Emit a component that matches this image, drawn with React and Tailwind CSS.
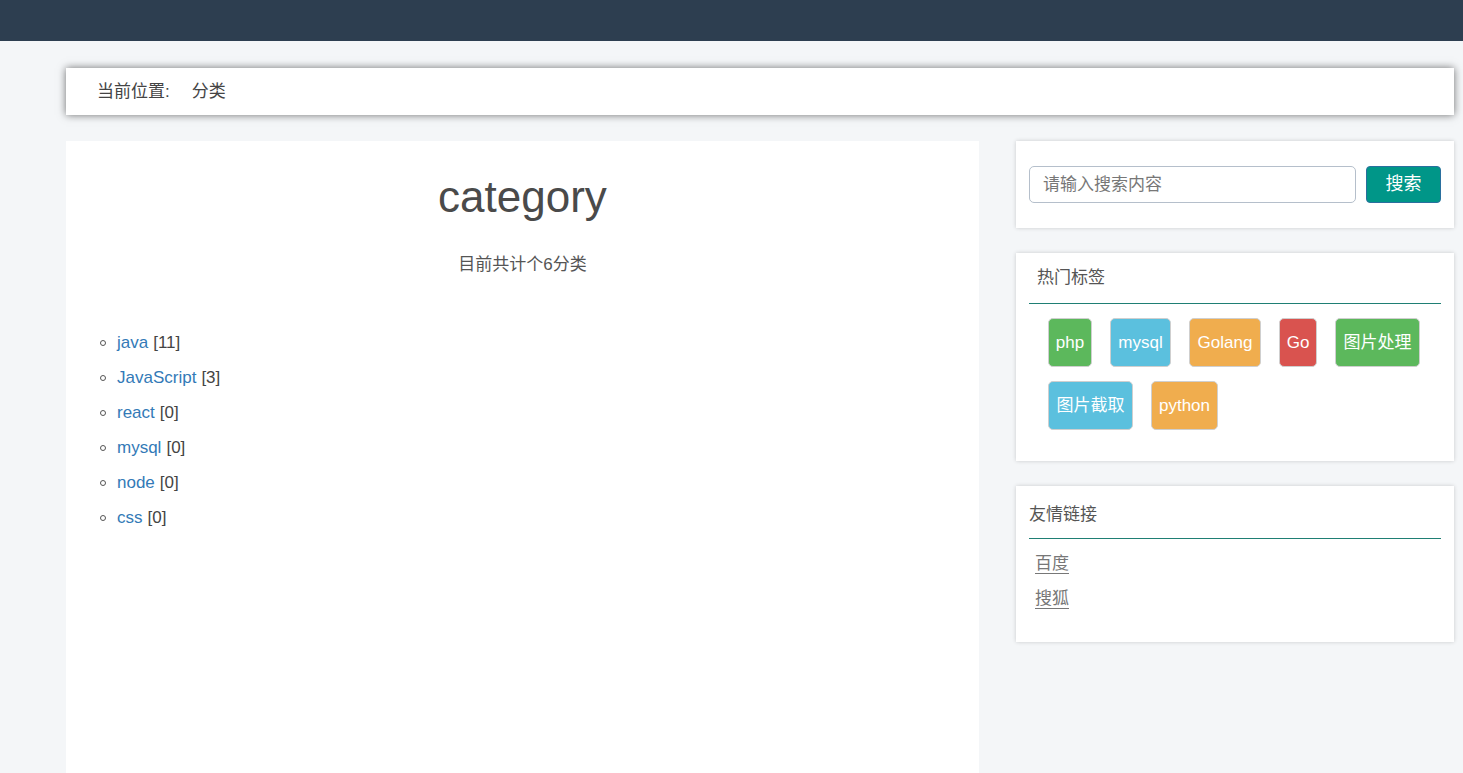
export default function App() {
  const font = { fontFamily: '"Liberation Sans", "Noto Sans CJK SC", sans-serif' };
  const cats = [
    ["java", 11],
    ["JavaScript", 3],
    ["react", 0],
    ["mysql", 0],
    ["node", 0],
    ["css", 0],
  ];
  const tags = [
    ["php", "bg-[#5cb85c]", "w-[44px]"],
    ["mysql", "bg-[#5bc0de]", "w-[61px]"],
    ["Golang", "bg-[#f0ad4e]", "w-[72px]"],
    ["Go", "bg-[#d9534f]", "w-[38px]"],
    ["图片处理", "bg-[#5cb85c]", "w-[85px]"],
    ["图片截取", "bg-[#5bc0de]", "w-[85px]"],
    ["python", "bg-[#f0ad4e]", "w-[67px]"],
  ];
  return (
    <div className="min-h-[773px] bg-[#f4f6f8] text-[#333]" style={font}>
      <div className="h-[41px] bg-[#2d3e50]" />
      <div className="ml-[66px] w-[1388px]">
        <div className="mt-[27px] flex h-[47px] items-center bg-white pl-[31px] text-[17px] text-[#444] shadow-[0_0_8px_rgba(0,0,0,0.55)]">
          <span>当前位置:</span>
          <span className="ml-[22px]">分类</span>
        </div>
        <div className="mt-[26px] flex gap-[37px]">
          <div className="h-[640px] w-[913px] bg-white pt-[31px]">
            <h1 className="text-center text-[44px] leading-[50px] text-[#4a4a4a]">category</h1>
            <p className="mt-[31px] text-center text-[17px] leading-[24px] text-[#555]">目前共计个6分类</p>
            <ul className="mt-[48px] pl-[34px]">
              {cats.map(([n, c]) => (
                <li key={n} className="flex h-[35px] items-center text-[17px]">
                  <span className="mr-[11px] inline-block h-[6px] w-[6px] rounded-full border border-[#555]" />
                  <a className="text-[#337ab7]">{n}</a>
                  <span className="ml-[5px] text-[#444]">[{c}]</span>
                </li>
              ))}
            </ul>
          </div>
          <div className="flex w-[438px] flex-col gap-[25px]">
            <div className="flex h-[87px] items-center gap-[10px] bg-white px-[13px] shadow-[0_0_4px_rgba(0,0,0,0.18)]">
              <div className="flex h-[37px] flex-1 items-center rounded-[5px] border border-[#b5bfcb] px-[13px] text-[17px] text-[#777]">
                请输入搜索内容
              </div>
              <button className="h-[37px] w-[75px] rounded-[4px] border border-[#2a6f9e] bg-[#009688] text-[18px] text-white">
                搜索
              </button>
            </div>
            <div className="h-[208px] bg-white px-[13px] pt-[12px] shadow-[0_0_4px_rgba(0,0,0,0.18)]">
              <div className="pl-[8px] text-[17px] leading-[26px] text-[#555]">热门标签</div>
              <div className="mt-[12px] h-px bg-[#1f7f74]" />
              <div className="mt-[14px] flex flex-wrap gap-x-[18px] gap-y-[14px] pl-[19px]">
                {tags.map(([t, bg, w]) => (
                  <span
                    key={t}
                    className={`flex h-[49px] items-center justify-center rounded-[5px] border border-[#cfcfcf] text-[17px] text-white ${bg} ${w}`}
                  >
                    {t}
                  </span>
                ))}
              </div>
            </div>
            <div className="h-[156px] bg-white px-[13px] pt-[16px] shadow-[0_0_4px_rgba(0,0,0,0.18)]">
              <div className="text-[17px] leading-[26px] text-[#555]">友情链接</div>
              <div className="mt-[10px] h-px bg-[#1f7f74]" />
              <div className="mt-[12px] pl-[6px] text-[17px] text-[#777]">
                <div className="h-[35px] leading-[25px]">
                  <a className="underline underline-offset-[4px]">百度</a>
                </div>
                <div className="leading-[25px]">
                  <a className="underline underline-offset-[4px]">搜狐</a>
                </div>
              </div>
            </div>
          </div>
        </div>
      </div>
    </div>
  );
}
